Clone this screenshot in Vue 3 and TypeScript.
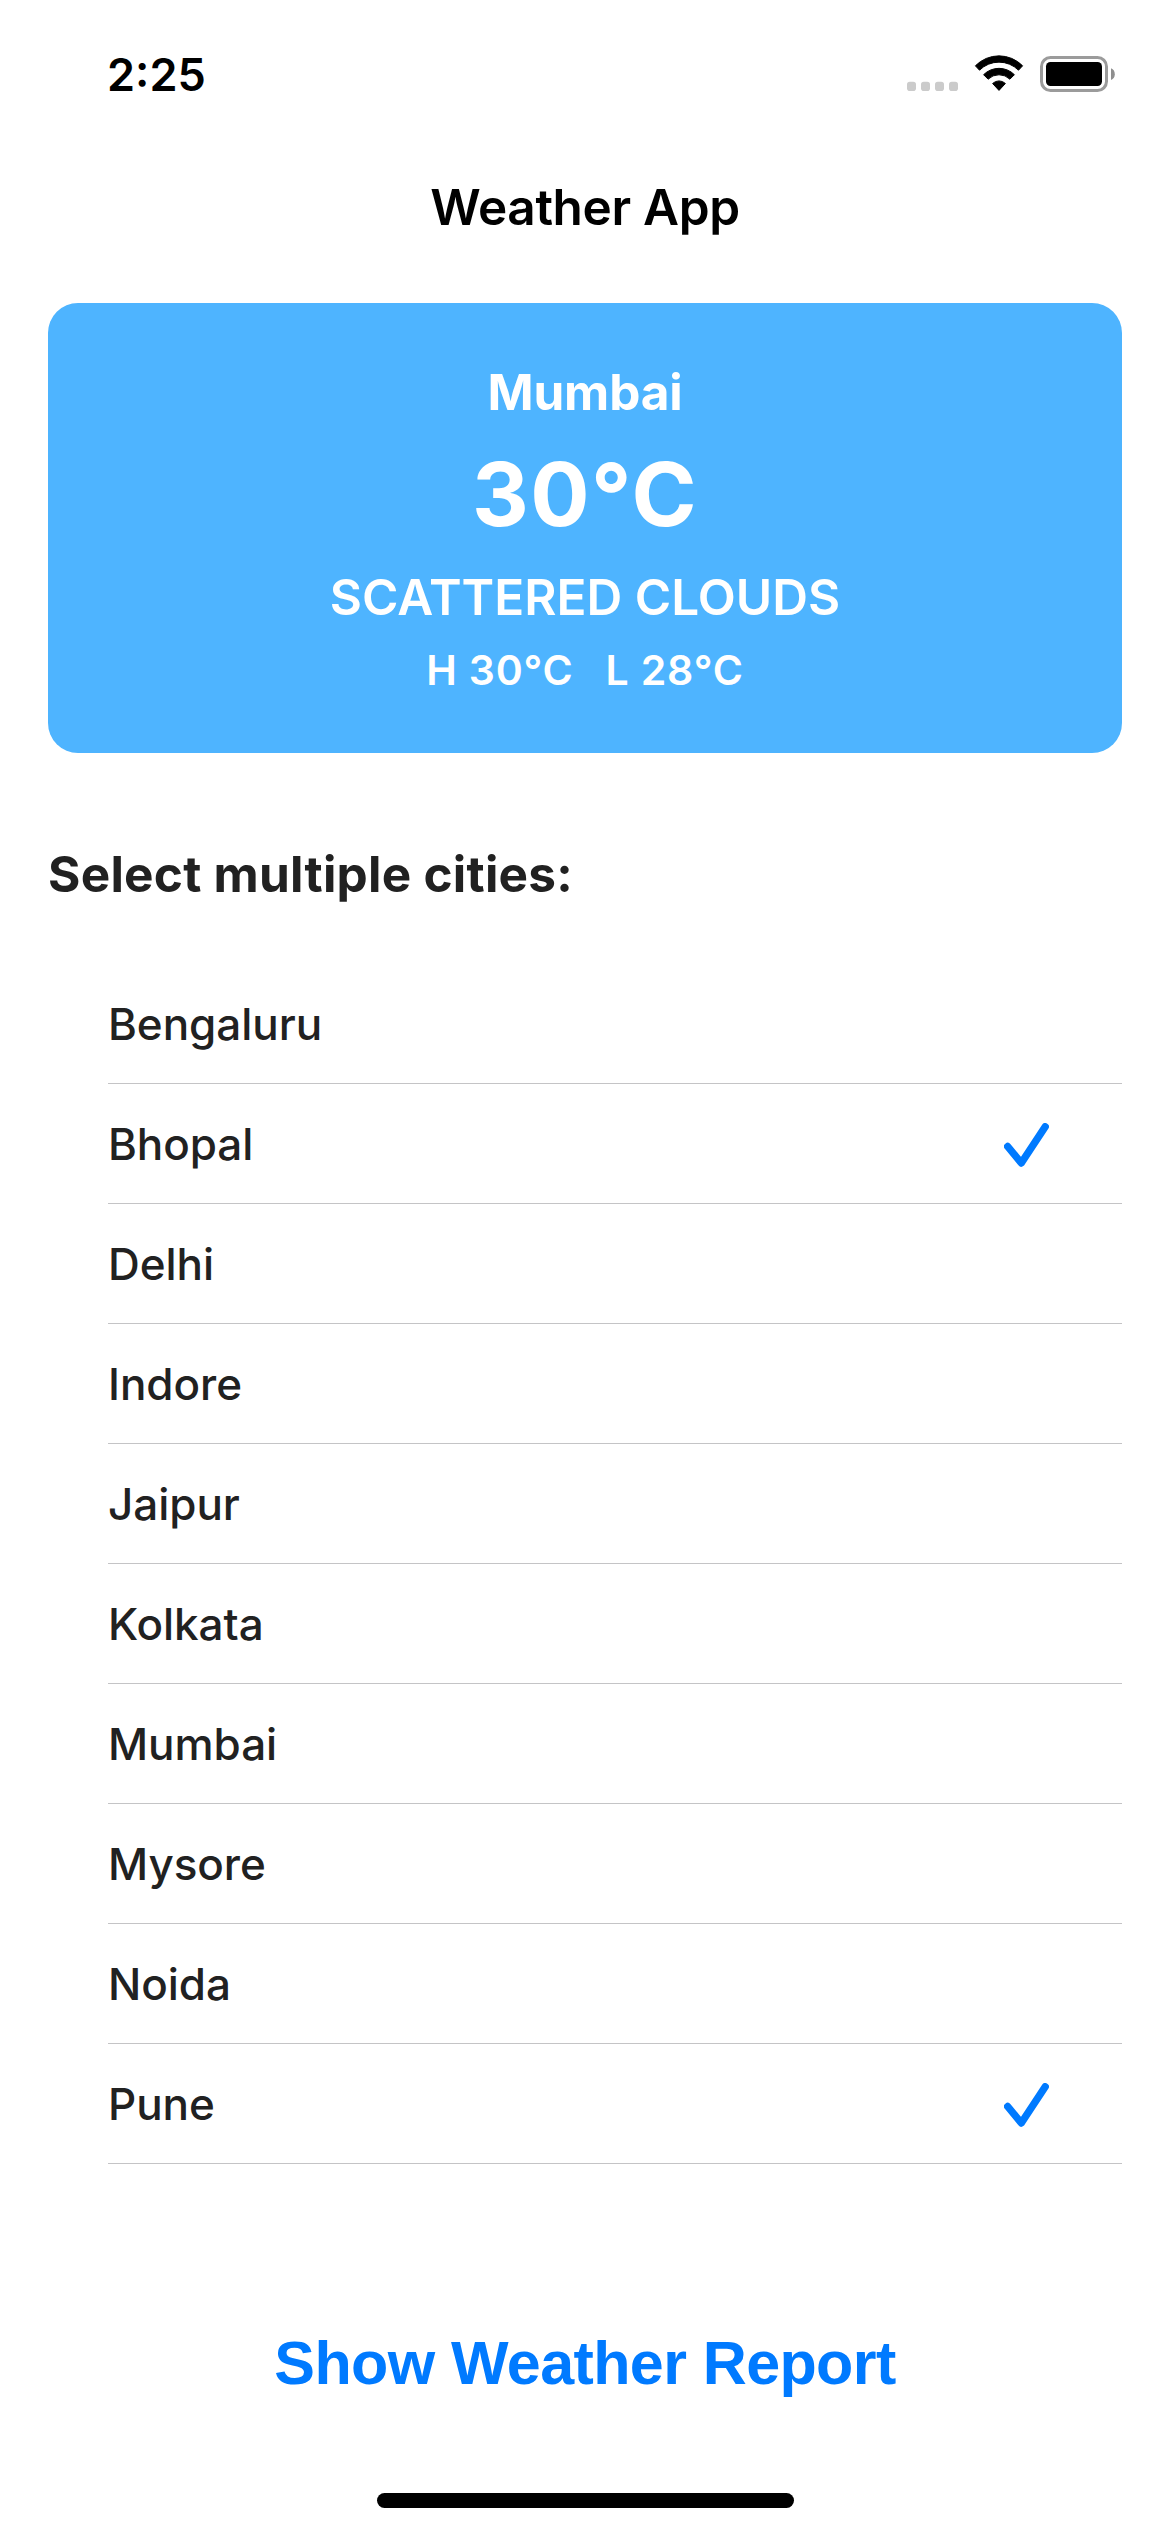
<script setup lang="ts">
import { ref } from 'vue'

interface City {
  name: string
  selected: boolean
}

const weather = {
  city: 'Mumbai',
  temp: '30°C',
  description: 'SCATTERED CLOUDS',
  high: 'H 30°C',
  low: 'L 28°C',
}

const cities = ref<City[]>([
  { name: 'Bengaluru', selected: false },
  { name: 'Bhopal', selected: true },
  { name: 'Delhi', selected: false },
  { name: 'Indore', selected: false },
  { name: 'Jaipur', selected: false },
  { name: 'Kolkata', selected: false },
  { name: 'Mumbai', selected: false },
  { name: 'Mysore', selected: false },
  { name: 'Noida', selected: false },
  { name: 'Pune', selected: true },
])

function toggle(city: City) {
  city.selected = !city.selected
}
</script>

<template>
  <div class="screen">
    <header class="status-bar">
      <span class="time">2:25</span>
      <svg class="status-icons" width="210" height="40" viewBox="0 0 210 40" aria-hidden="true">
        <g fill="#cbcbcb">
          <rect x="2" y="28.8" width="9" height="9.2" rx="2.8" />
          <rect x="16" y="28.8" width="9" height="9.2" rx="2.8" />
          <rect x="30" y="28.8" width="9" height="9.2" rx="2.8" />
          <rect x="44" y="28.8" width="9" height="9.2" rx="2.8" />
        </g>
        <g fill="#000" stroke="#000" stroke-width="1" stroke-linejoin="round">
          <path d="M70.4 12.8 A33 33 0 0 1 117.6 12.8 L113.5 17.2 A27.6 27.6 0 0 0 74.5 17.2 Z" />
          <path d="M78.6 21.7 A21.8 21.8 0 0 1 109.4 21.7 L104.9 26.2 A15.6 15.6 0 0 0 83.1 26.2 Z" />
          <path d="M87.6 30.5 A9.2 9.2 0 0 1 100.4 30.5 L94 37.4 Z" />
        </g>
        <rect x="136.5" y="4.5" width="65" height="33" rx="9" fill="none" stroke="#9b9b9b" stroke-width="3" />
        <rect x="141" y="9" width="56" height="24" rx="4.5" fill="#000" />
        <path d="M206 15.3 A6.4 6.4 0 0 1 206 27 Z" fill="#8f8f8f" />
      </svg>
    </header>

    <h1 class="title">Weather App</h1>

    <section class="card">
      <div class="card-city">{{ weather.city }}</div>
      <div class="card-temp">{{ weather.temp }}</div>
      <div class="card-desc">{{ weather.description }}</div>
      <div class="card-range">
        <span>{{ weather.high }}</span>
        <span>{{ weather.low }}</span>
      </div>
    </section>

    <h2 class="heading">Select multiple cities:</h2>

    <ul class="cities">
      <li v-for="city in cities" :key="city.name" class="city" @click="toggle(city)">
        <span>{{ city.name }}</span>
        <svg v-if="city.selected" class="check" width="45" height="44" viewBox="0 0 45 44">
          <path d="M3.7 23.5 L17.3 40 L41.2 3.8" />
        </svg>
      </li>
    </ul>

    <button class="report" type="button">Show Weather Report</button>

    <div class="home-indicator"></div>
  </div>
</template>

<style>
body {
  margin: 0;
  background: #fff;
}
</style>

<style scoped>
.screen {
  box-sizing: border-box;
  width: 1170px;
  height: 2532px;
  display: flex;
  flex-direction: column;
  background: #fff;
  color: #212121;
  font-family: Inter, "Liberation Sans", sans-serif;
  overflow: hidden;
}

.status-bar {
  box-sizing: border-box;
  height: 141px;
  padding: 8px 55px 0 107px;
  display: flex;
  align-items: center;
  justify-content: space-between;
  color: #000;
}

.time {
  font-size: 45px;
  line-height: 54px;
  font-weight: 600;
}

.status-icons {
  display: block;
  margin-bottom: 3px;
}

.title {
  margin: 0;
  line-height: 132px;
  text-align: center;
  font-size: 49.5px;
  font-weight: 600;
  letter-spacing: -0.34px;
  color: #000;
}

.card {
  box-sizing: border-box;
  height: 450px;
  margin: 30px 48px 0;
  padding-top: 57px;
  border-radius: 30px;
  background: #4eb4ff;
  color: #fff;
  text-align: center;
}

.card-city {
  font-size: 49.5px;
  line-height: 64px;
  font-weight: 700;
  letter-spacing: -0.15px;
}

.card-temp {
  margin-top: 16px;
  font-size: 88px;
  line-height: 108px;
  font-weight: 700;
  letter-spacing: 1.4px;
}

.card-desc {
  margin-top: 17px;
  font-size: 49.5px;
  line-height: 64px;
  font-weight: 570;
  letter-spacing: 0;
}

.card-range {
  display: flex;
  justify-content: center;
  gap: 32px;
  margin-top: 15px;
  font-size: 41px;
  line-height: 52px;
  font-weight: 570;
  letter-spacing: 0.8px;
}

.heading {
  margin: 89px 48px 0;
  font-size: 49.5px;
  line-height: 64px;
  font-weight: 700;
  letter-spacing: 0.26px;
}

.cities {
  margin: 58px 48px 0 108px;
  padding: 0;
  list-style: none;
}

.city {
  box-sizing: border-box;
  height: 120px;
  padding: 1px 73px 0 0;
  display: flex;
  align-items: center;
  justify-content: space-between;
  border-bottom: 1px solid #c4c4c6;
  font-size: 44px;
  line-height: 54px;
  font-weight: 500;
  letter-spacing: -0.05px;
}

.check {
  display: block;
  margin-top: 2px;
  fill: none;
  stroke: #007aff;
  stroke-width: 7.4;
  stroke-linecap: round;
  stroke-linejoin: round;
}

.report {
  margin: 163px auto 0;
  padding: 0;
  border: 0;
  background: none;
  color: #007aff;
  font-family: "Liberation Sans", Arial, sans-serif;
  font-size: 61px;
  line-height: 72px;
  font-weight: 700;
  letter-spacing: -0.6px;
}

.home-indicator {
  width: 417px;
  height: 15px;
  margin: auto auto 24px;
  border-radius: 8px;
  background: #000;
}
</style>
